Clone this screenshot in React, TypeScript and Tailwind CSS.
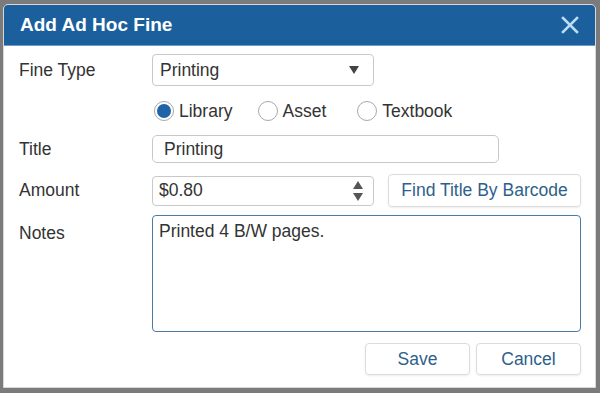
import React from "react";

function Radio({ checked, label, className }: { checked?: boolean; label: string; className?: string }) {
  return (
    <div className={"flex items-center " + (className || "")}>
      <div className="w-[20px] h-[20px] rounded-full border border-[#a8a8a8] bg-white flex items-center justify-center">
        {checked && <div className="w-[14px] h-[14px] rounded-full bg-[#1f64a6]" />}
      </div>
      <span className="ml-[5px] text-[17.5px] text-[#333]">{label}</span>
    </div>
  );
}

export default function App() {
  return (
    <div
      className="w-[600px] h-[393px] bg-[#7b7b7b] flex pt-[4px] pl-[3px] pr-[4px] pb-[5px] overflow-hidden"
      style={{ fontFamily: '"Liberation Sans", Arial, sans-serif' }}
    >
      <div className="flex-1 flex flex-col bg-white rounded-t-[5px] border border-[#d8d8d8] overflow-hidden">
        <div className="h-[41px] bg-[#1c5f9d] flex items-center pl-[16px] pr-[16px] border-b border-[#6d9cc6]">
          <span className="text-white font-bold text-[19px] flex-1">Add Ad Hoc Fine</span>
          <svg width="18" height="18" viewBox="0 0 18 18">
            <path d="M2 2 L16 16 M16 2 L2 16" stroke="#bcdcf4" strokeWidth="2.6" strokeLinecap="square" />
          </svg>
        </div>
        <div className="flex flex-col pl-[15px] pr-[14px] text-[17.5px] text-[#333]">
          {/* Fine Type */}
          <div className="flex items-center mt-[8px] h-[32px]">
            <div className="w-[133px]">Fine Type</div>
            <div className="w-[222px] h-[32px] border border-[#c8c8c8] rounded-[4px] flex items-center pl-[7px] pr-[14px]">
              <span className="flex-1">Printing</span>
              <svg width="10" height="8" viewBox="0 0 10 8">
                <path d="M0 0 H10 L5 8 Z" fill="#444" />
              </svg>
            </div>
          </div>
          {/* Radios */}
          <div className="flex items-center mt-[15px] h-[20px] pl-[135px]">
            <Radio checked label="Library" />
            <Radio label="Asset" className="ml-[25px]" />
            <Radio label="Textbook" className="ml-[31px]" />
          </div>
          {/* Title */}
          <div className="flex items-center mt-[14px] h-[28px]">
            <div className="w-[133px]">Title</div>
            <div className="w-[347px] h-[28px] border border-[#c8c8c8] rounded-[5px] flex items-center pl-[11px]">
              Printing
            </div>
          </div>
          {/* Amount */}
          <div className="flex items-center mt-[11px] h-[33px]">
            <div className="w-[133px]">Amount</div>
            <div className="w-[222px] h-[30px] border border-[#c8c8c8] rounded-[4px] flex items-center pl-[6px] pr-[10px]">
              <span className="flex-1">$0.80</span>
              <svg width="10" height="20" viewBox="0 0 10 20">
                <path d="M0 8 L5 0 L10 8 Z" fill="#555" />
                <path d="M0 12 H10 L5 20 Z" fill="#555" />
              </svg>
            </div>
            <div className="ml-[14px] w-[193px] h-[33px] border border-[#dcdcdc] rounded-[4px] shadow-[0_1px_2px_rgba(0,0,0,0.08)] flex items-center justify-center text-[#2e5f8c]">
              Find Title By Barcode
            </div>
          </div>
          {/* Notes */}
          <div className="flex items-start mt-[8px]">
            <div className="w-[133px] pt-[5px]">Notes</div>
            <div className="w-[429px] h-[117px] border-[1.5px] border-[#4a7aa6] rounded-[4px] pl-[6px] pt-[2px]">
              Printed 4 B/W pages.
            </div>
          </div>
          {/* Buttons */}
          <div className="flex justify-end mt-[11px] gap-[6px]">
            <div className="w-[105px] h-[32px] border border-[#dcdcdc] rounded-[4px] shadow-[0_1px_2px_rgba(0,0,0,0.08)] flex items-center justify-center text-[#2e5f8c]">
              Save
            </div>
            <div className="w-[105px] h-[32px] border border-[#dcdcdc] rounded-[4px] shadow-[0_1px_2px_rgba(0,0,0,0.08)] flex items-center justify-center text-[#2e5f8c]">
              Cancel
            </div>
          </div>
        </div>
      </div>
    </div>
  );
}
